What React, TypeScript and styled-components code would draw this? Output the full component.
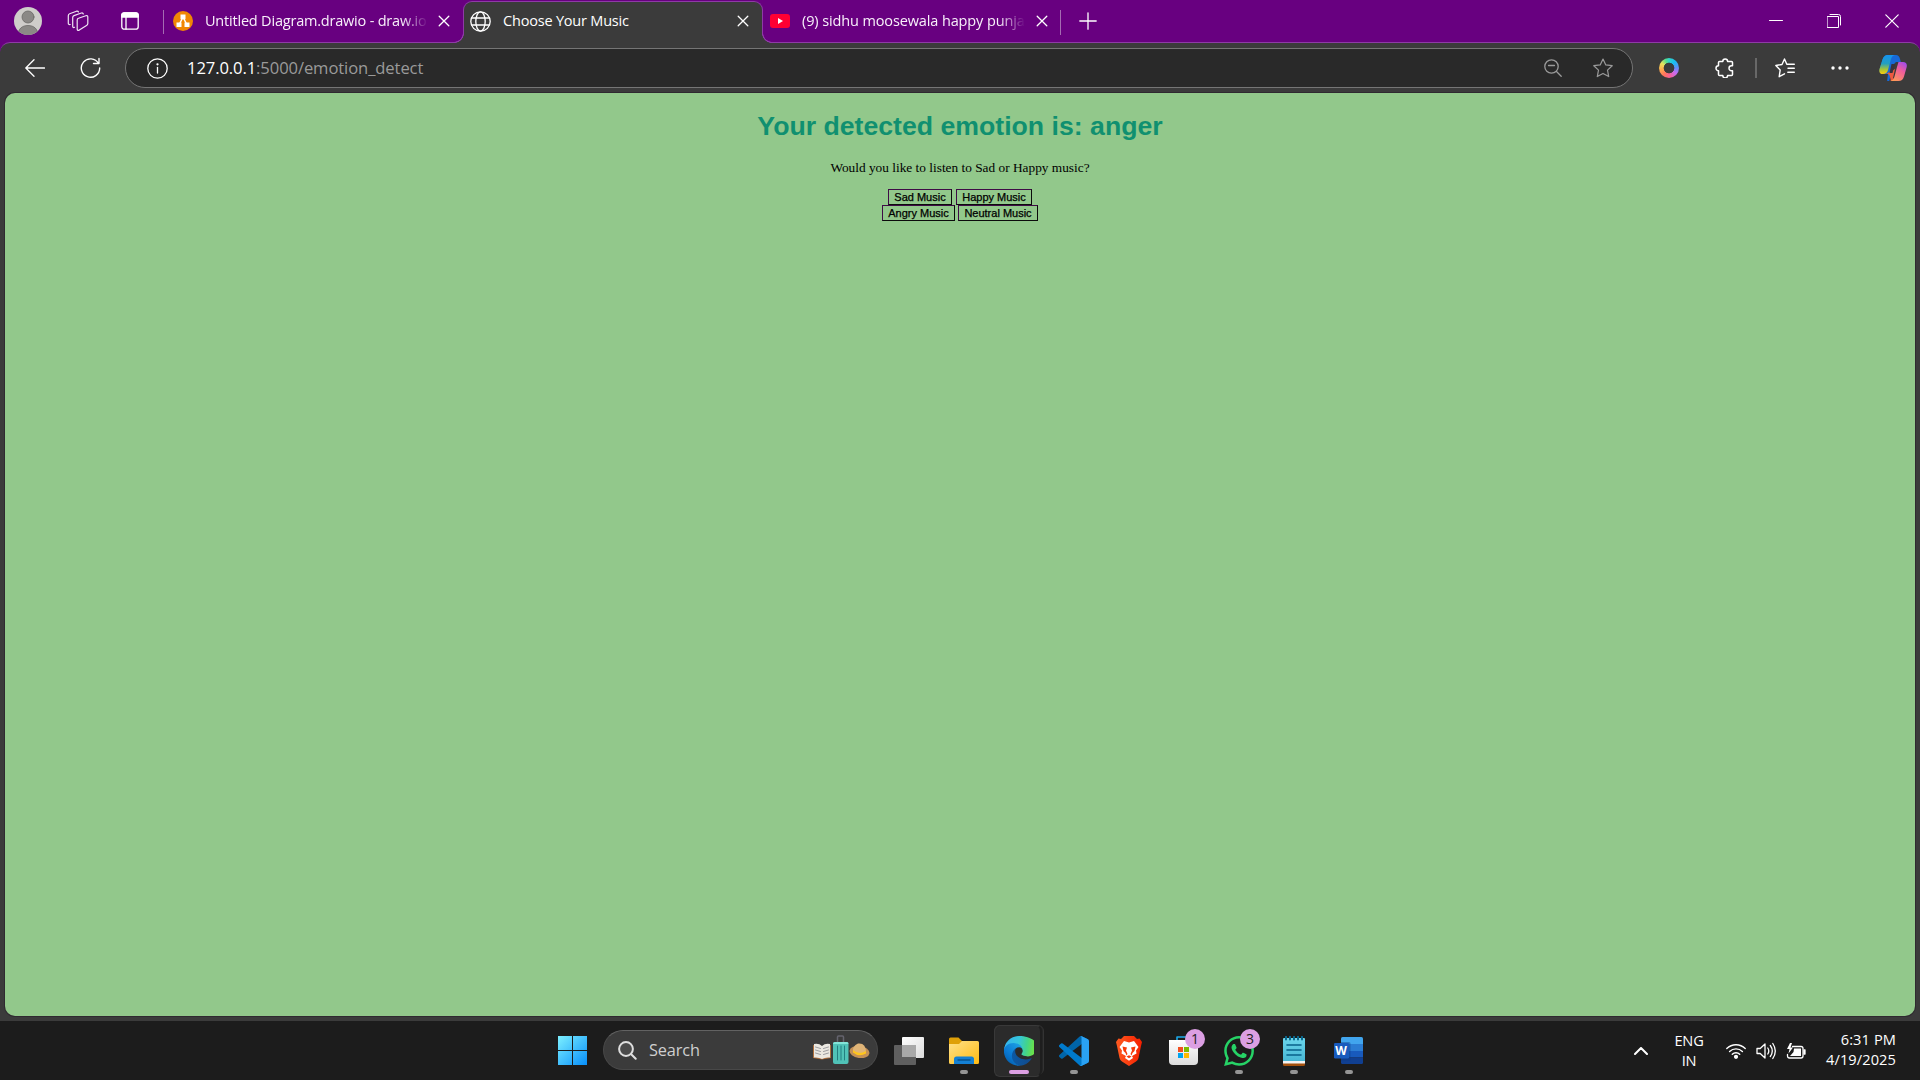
import React from "react";
import styled, { createGlobalStyle, css } from "styled-components";

const ui = `"Open Sans", "Noto Sans", sans-serif`;
const purple = "#680080";
const line = "#8e3ba6";
const chrome = "#3b3b3b";

const Global = createGlobalStyle`
  *{box-sizing:border-box}
  html,body{margin:0;padding:0;background:${purple};overflow:hidden}
  svg{display:block;flex:none}
`;

const Screen = styled.div`
  width: 1920px;
  height: 1080px;
  display: flex;
  flex-direction: column;
  background: ${purple};
  font-family: ${ui};
  overflow: hidden;
`;
const TitleBar = styled.header`
  height: 42px;
  flex: none;
  display: flex;
  align-items: flex-start;
`;
const Cell = styled.div<{ $w: number; $h?: number }>`
  width: ${(p) => p.$w}px;
  height: ${(p) => p.$h ?? 42}px;
  flex: none;
  display: flex;
  align-items: center;
  justify-content: center;
`;
const Divider = styled.i<{ $h: number; $top: number; $c: string; $w?: number }>`
  width: ${(p) => p.$w ?? 1}px;
  height: ${(p) => p.$h}px;
  margin-top: ${(p) => p.$top}px;
  background: ${(p) => p.$c};
  flex: none;
`;
const Tab = styled.div<{ $w: number; $pad: number }>`
  width: ${(p) => p.$w}px;
  height: 42px;
  padding-left: ${(p) => p.$pad}px;
  display: flex;
  align-items: center;
  color: #f8f0fa;
  flex: none;
`;
const ActiveTab = styled(Tab)`
  position: relative;
  z-index: 2;
  height: 42px;
  margin-top: 1px;
  padding-bottom: 3px;
  background: ${chrome};
  border: 1px solid ${line};
  border-bottom: 0;
  border-radius: 9px 9px 0 0;
  color: #fff;
  &::before,
  &::after {
    content: "";
    position: absolute;
    bottom: 0;
    width: 10px;
    height: 10px;
    border: 0 solid ${line};
  }
  &::before {
    left: -10px;
    background: radial-gradient(circle at 0 0, ${purple} 8.5px, ${line} 9px 9.700px, ${chrome} 10.200px);
  }
  &::after {
    right: -10px;
    background: radial-gradient(circle at 100% 0, ${purple} 8.5px, ${line} 9px 9.700px, ${chrome} 10.200px);
  }
`;
const TabTitle = styled.span<{ $w: number; $ls: number; $fade?: boolean }>`
  width: ${(p) => p.$w}px;
  margin-left: 12px;
  overflow: hidden;
  white-space: nowrap;
  font-size: 14.5px;
  line-height: 24px;
  letter-spacing: ${(p) => p.$ls}px;
  ${(p) => p.$fade && css`mask-image: linear-gradient(90deg, #000 calc(100% - 26px), transparent);`}
`;
const Spacer = styled.div`
  flex: 1;
`;
const Toolbar = styled.nav`
  height: 51px;
  flex: none;
  display: flex;
  align-items: flex-start;
  padding: 6px 0 0 7px;
  background: ${chrome};
  border-top: 1px solid ${line};
  border-radius: 10px 10px 0 0;
`;
const AddressBar = styled.div`
  width: 1508px;
  height: 40px;
  margin: -1px 0 0 7px;
  padding-left: 21px;
  display: flex;
  align-items: center;
  background: #292929;
  border: 1px solid #757575;
  border-radius: 20px;
`;
const Url = styled.span`
  margin-left: 19px;
  flex: 1;
  font-size: 16.6px;
  line-height: 26px;
  letter-spacing: -0.1px;
  color: #9a9a9a;
  b {
    font-weight: 400;
    color: #fff;
  }
`;
const Frame = styled.div`
  flex: 1;
  padding: 0 5px 5px;
  background: ${chrome};
  min-height: 0;
`;
const Page = styled.main`
  height: 100%;
  padding-top: 17px;
  display: flex;
  flex-direction: column;
  align-items: center;
  background: #92c88b;
  border-radius: 10px;
  box-shadow: 0 0 0 1px #2f2a30;
`;
const Heading = styled.h1`
  margin: 0;
  font: bold 26.67px/32px "Liberation Sans", sans-serif;
  color: #109070;
  white-space: nowrap;
`;
const Question = styled.p`
  margin: 18px 0 13px;
  font: 13.33px/16px "Liberation Serif", serif;
  color: #000;
`;
const ButtonRow = styled.div<{ $gap: number }>`
  display: flex;
  gap: ${(p) => p.$gap}px;
  height: 16px;
`;
const MusicButton = styled.button<{ $w: number }>`
  width: ${(p) => p.$w}px;
  height: 16px;
  padding: 0;
  background: transparent;
  border: 1px solid #0b0b0b;
  border-top-color: #3f0c46;
  border-left-color: #3f0c46;
  font: 11px/14px "Liberation Sans", sans-serif;
  -webkit-text-stroke: 0.25px #000;
  color: #000;
  white-space: nowrap;
`;
const Taskbar = styled.footer`
  height: 59px;
  flex: none;
  display: flex;
  padding-left: 545px;
  background: #1c1c1c;
`;
const Search = styled.div`
  width: 275px;
  height: 40px;
  margin: 9px 3px 0;
  padding-left: 14px;
  display: flex;
  align-items: center;
  background: #3b3b3b;
  border: 1px solid #484848;
  border-top-color: #626262;
  border-radius: 20px;
  color: #cfcfcf;
  font-size: 16.3px;
  span {
    width: 163px;
    margin-left: 12px;
    letter-spacing: -0.1px;
  }
`;
const AppButton = styled.div`
  position: relative;
  width: 55px;
  height: 59px;
  display: flex;
  align-items: center;
  justify-content: center;
  flex: none;
`;
const Glow = styled.div`
  position: absolute;
  left: 3px;
  top: 4px;
  width: 50px;
  height: 50px;
  border-radius: 6px;
  background: #252525;
  border: 1px solid #333;
  &::after {
    content: "";
    position: absolute;
    left: -1px;
    top: -1px;
    width: 45px;
    height: 50px;
    border-radius: 6px;
    background: #2b2b2b;
    border: 1px solid #393939;
    border-right: 2px solid #1e1e1e;
  }
`;
const Art = styled.div`
  position: relative;
`;
const Running = styled.i<{ $on?: boolean }>`
  position: absolute;
  bottom: 6px;
  left: ${(p) => (p.$on ? 18 : 24)}px;
  width: ${(p) => (p.$on ? 20 : 8)}px;
  height: 4px;
  border-radius: 2px;
  background: ${(p) => (p.$on ? "#dc9fe3" : "#959595")};
`;
const Badge = styled.b`
  position: absolute;
  left: 29px;
  top: 8px;
  width: 20px;
  height: 20px;
  border-radius: 50%;
  background: #dc9fe3;
  color: #222;
  font: 400 14px/20px ${ui};
  text-align: center;
`;
const Tray = styled.div`
  display: flex;
  margin-left: auto;
  color: #fff;
`;
const Stack = styled.div<{ $w: number; $right?: boolean; $ls: number; $top: number }>`
  width: ${(p) => p.$w}px;
  padding-top: ${(p) => p.$top}px;
  display: flex;
  flex-direction: column;
  align-items: ${(p) => (p.$right ? "flex-end" : "center")};
  padding-right: ${(p) => (p.$right ? 24 : 0)}px;
  font-size: 14.6px;
  line-height: 20px;
  letter-spacing: ${(p) => p.$ls}px;
  white-space: nowrap;
`;

type IconProps = { w?: number; h?: number; c?: string; s?: number; box?: string; children: React.ReactNode };
const Icon = ({ w = 20, h, c = "#fff", s = 1.2, box, children }: IconProps) => (
  <svg width={w} height={h ?? w} viewBox={box ?? `0 0 ${w} ${h ?? w}`} fill="none" stroke={c} strokeWidth={s} strokeLinecap="round" strokeLinejoin="round">
    {children}
  </svg>
);
const Close = () => (
  <Icon w={12} s={1.3}><path d="M1.2 1.2l9.6 9.6M10.8 1.2L1.2 10.8" /></Icon>
);
const starPath = "M10 1l2.8 5.9 6.4.8-4.7 4.4 1.2 6.5L10 15.4l-5.7 3.2 1.2-6.5L.8 7.7l6.4-.8z";

const Profile = () => (
  <Icon w={28} s={0}>
    <clipPath id="pf"><circle cx="14" cy="14" r="14" /></clipPath>
    <circle cx="14" cy="14" r="14" fill="#cfcdca" />
    <g clipPath="url(#pf)" fill="#8b8986" stroke="#6b6967" strokeWidth=".8">
      <circle cx="14" cy="10" r="6" />
      <path d="M4 28c0-6 4-9.500 10-9.500S24 22 24 28z" />
    </g>
  </Icon>
);
const Workspaces = () => (
  <Icon w={22} s={1.2} c="#efe4f2">
    <path d="M11.500 8.300l7.300-2.500q2-.6 2 1.300v6.500q0 1.300-1.300 1.900l-7.200 4.600q-2 1-2.100-1V10q0-1.300 1.300-1.700z" />
    <path d="M7.500 17.300l-.5.200q-1.300.2-1.300-1.200V7.500q0-1.300 1.300-1.900l7.400-2.600q1.500-.4 1.900 1" />
    <path d="M3.200 14.500q-1.900.3-1.900-1.300V5.700q0-1.400 1.300-1.900L9.500 1.200q1.500-.4 2 .8" />
  </Icon>
);
const TabsMenu = () => (
  <Icon w={18} s={1.3} c="#fff">
    <rect x=".8" y=".8" width="16.400" height="16.400" rx="2.500" />
    <path d="M.8 5V3a2.200 2.200 0 012.200-2.200h12A2.200 2.200 0 0117.200 3v2z" fill="#fff" />
    <path d="M5 5v12" />
  </Icon>
);
const Drawio = () => (
  <Icon w={20} s={1.5}>
    <circle cx="10" cy="10" r="10" fill="#f08705" stroke="none" />
    <path d="M10 6L6 14M10 6l4 8" />
    <path d="M7.500 3.500h5v4.800h-5zM3.500 11.500h5V16h-5zM11.500 11.500h5V16h-5z" fill="#fff" stroke="none" />
  </Icon>
);
const Globe = () => (
  <Icon w={21} s={1.3}>
    <circle cx="10.500" cy="10.500" r="9.700" />
    <ellipse cx="10.500" cy="10.500" rx="4.700" ry="9.700" />
    <path d="M1.800 7h17.400M1.800 14h17.400" />
  </Icon>
);
const Youtube = () => (
  <Icon w={20} h={14} s={0}>
    <rect width="20" height="14" rx="3" fill="#ff0033" />
    <path d="M8 4l5 3-5 3z" fill="#fff" />
  </Icon>
);
const Copilot = () => (
  <Icon w={28} h={26} s={0}>
    <defs>
      <linearGradient id="ca" x1="0" y1="0" x2="0" y2="1"><stop offset="0" stopColor="#1592f0" /><stop offset=".45" stopColor="#239fc0" /><stop offset=".75" stopColor="#a5c437" /><stop offset="1" stopColor="#ffcb0a" /></linearGradient>
      <linearGradient id="cb" x1=".8" y1="0" x2=".2" y2="1"><stop offset="0" stopColor="#a34de8" /><stop offset=".4" stopColor="#f05d9a" /><stop offset="1" stopColor="#ff9c55" /></linearGradient>
    </defs>
    <path d="M10 0h7q3 0 4 4l.8 3H17l-3 3-4 17H8l1-8H3.500Q0 18.500.7 14L3.500 4.500Q5 0 10 0z" fill="#1769d8" />
    <path d="M8 0h8q-3 .5-4 4l-3 11q-1 4-5 4-4.500 0-3.500-5L3.500 4.500Q5 0 8 0z" fill="url(#ca)" />
    <path d="M7 19q3-1 4 3l1 4h5l-3-3 2-9z" fill="#ee5940" />
    <path d="M19.500 7H24q4.500 0 3.700 5L25 21.500q-1.300 4.500-5.500 4.500H11q3.500-.5 4.500-4.500L18 12z" fill="url(#cb)" />
    <path d="M12.500 9l-2 9h3l2.500-9z" fill="#38323c" />
  </Icon>
);
const Wheel = styled.div`
  width: 20px;
  height: 20px;
  border-radius: 50%;
  background: radial-gradient(circle, ${chrome} 0 5px, transparent 5.700px),
    conic-gradient(#32d4ca, #17bdf4 12%, #5e8ff5 24%, #c46bf3 35%, #f66099 48%, #ff735c 60%, #ffac4e 72%, #e9e35c 84%, #52df91 94%, #32d4ca);
`;
const SearchArt = () => (
  <Icon w={58} h={30} s={0} c="none">
    <path d="M1 10l9 2 9-2v13l-9 1.500L1 23z" fill="#ad6e3c" />
    <path d="M2 9q5-1 8 2v13q-3-2-8-1.500zM18 9q-5-1-8 2v13q3-2 8-1.500z" fill="#ebe8e1" />
    <path d="M3.500 12l5 1.500M3.500 15l5 1.500M3.500 18l5 1.500M16.500 12l-5 1.500M16.500 15l-5 1.500M16.500 18l-5 1.500" stroke="#9d9da0" strokeWidth="1" />
    <path d="M25.500 8V2q0-1 1-1h4q1 0 1 1v6" fill="none" stroke="#65646e" strokeWidth="1.500" />
    <rect x="21" y="7" width="15.500" height="22" rx="2" fill="#50c2b7" />
    <path d="M21 9q0-2 2-2h12q1.500 0 1.500 2z" fill="#82e4d7" />
    <path d="M25.500 11v14M29 11v14M32.500 11v14" stroke="#237f80" strokeWidth="1" />
    <ellipse cx="47.500" cy="17" rx="10" ry="6" transform="rotate(8 47.500 17)" fill="#c49056" />
    <path d="M41 17q-1-6 5-8.500 8-1 8 9-6 4-13-.5z" fill="#dfb477" />
    <path d="M41 15q6 5.500 13 1v2.500q-7 4-13-1z" fill="#ffc61b" />
  </Icon>
);
const Explorer = () => (
  <Icon w={30} h={28} s={0}>
    <defs><linearGradient id="ex" x1="0" y1="0" x2="1" y2="1"><stop stopColor="#ffe18a" /><stop offset="1" stopColor="#ffbb12" /></linearGradient></defs>
    <path d="M0 8V2Q0 .5 1.500.5h8L13 4h11v6H0z" fill="#dfa008" />
    <path d="M0 7h10l3-3h15.500Q30 4 30 5.500v20q0 1.500-1.500 1.500h-27Q0 27 0 25.500z" fill="url(#ex)" />
    <path d="M5 27v-5q0-2.500 2.500-2.500h15Q25 19.500 25 22v5z" fill="#1480d4" />
    <path d="M9 23h12" stroke="#07538f" strokeWidth="1.300" />
  </Icon>
);
const Edge = () => (
  <Icon w={30} s={0} box="0 0 256 256">
    <defs>
      <linearGradient id="e1" x1="63" y1="178" x2="241" y2="178" gradientUnits="userSpaceOnUse"><stop stopColor="#0c59a4" /><stop offset="1" stopColor="#114a8b" /></linearGradient>
      <linearGradient id="e2" x1="157" y1="100" x2="46" y2="222" gradientUnits="userSpaceOnUse"><stop stopColor="#1b9de2" /><stop offset=".65" stopColor="#0b7ad4" /><stop offset="1" stopColor="#0667b8" /></linearGradient>
      <linearGradient id="e3" x1="15" y1="60" x2="250" y2="100" gradientUnits="userSpaceOnUse"><stop stopColor="#35b5ed" /><stop offset=".45" stopColor="#35c5dc" /><stop offset=".75" stopColor="#42d48c" /><stop offset="1" stopColor="#68e04d" /></linearGradient>
    </defs>
    <path d="M231 190a94 94 0 01-11 5 102 102 0 01-36 6c-47 0-89-32-89-74 0-11 7-22 17-28-43 2-54 46-54 72 0 74 68 81 82 81 8 0 20-2 27-4l1-1a128 128 0 0067-53 3 3 0 00-4-4z" fill="url(#e1)" />
    <path d="M106 241a79 79 0 01-23-21 81 81 0 0130-121c3-1 8-4 15-4a31 31 0 0125 12 30 30 0 016 18c0-1 25-79-80-79-44 0-80 42-80 79a130 130 0 0012 56 128 128 0 00156 67 76 76 0 01-61-7z" fill="url(#e2)" />
    <path d="M152 149c-1 1-3 2-3 6 0 3 2 6 6 8 17 12 50 11 50 11a72 72 0 0036-10 73 73 0 0036-63c0-27-10-44-13-53C240 18 186 0 128 0A128 128 0 000 126c1-37 37-67 80-67 4 0 24 0 42 10 16 8 25 18 31 29 6 10 7 24 7 29s-3 13-8 22z" fill="url(#e3)" />
  </Icon>
);
const VsCode = () => (
  <Icon w={30} s={0} box="0 0 100 100">
    <path d="M96.500 10.700L75.900.8a6.200 6.200 0 00-7.100 1.200L1.300 63.500a4.200 4.200 0 000 6.200l5.500 5a4.200 4.200 0 005.300.2l81.300-61.600A4 4 0 01100 16.500v-.3a6.300 6.300 0 00-3.500-5.500z" fill="#0065a9" />
    <path d="M96.500 89.300l-20.600 9.900a6.200 6.200 0 01-7.100-1.200L1.300 36.500a4.200 4.200 0 010-6.200l5.500-5a4.200 4.200 0 015.300-.2l81.300 61.600a4 4 0 006.600-3.200v.3a6.300 6.300 0 01-3.500 5.500z" fill="#007acc" />
    <path d="M75.900 99.200a6.200 6.200 0 01-7.100-1.200c2.300 2.300 6.200.7 6.200-2.600V4.600c0-3.300-3.900-4.900-6.200-2.600a6.200 6.200 0 017.100-1.200l20.600 9.900a6.300 6.300 0 013.500 5.600v67.400a6.300 6.300 0 01-3.500 5.600z" fill="#2aa2f4" />
  </Icon>
);
const Brave = () => (
  <Icon w={26} h={30} s={0}>
    <defs><linearGradient id="br"><stop stopColor="#ff5b20" /><stop offset="1" stopColor="#f51f00" /></linearGradient></defs>
    <path d="M8 0h10l3 3 2.500-.5L26 6l-1 4-2.500 12q-.5 2-2.500 3.500L13 30l-7-4.500Q4 24 3.500 22L1 10 0 6l2.500-3.500L5 3z" fill="url(#br)" />
    <path d="M13 6.500l5-1.500 4.500 6-2.500 3.500.5 3-4.500 2.500 1 2-4 2.800-4-2.800 1-2L5.500 17.500l.5-3L3.500 11 8 5z" fill="#fff" />
    <path d="M6.500 10.500l4.500 1-1 3 1.500 3.500-1 1.500-1-2.500-2-2zM19.500 10.500l-4.500 1 1 3-1.500 3.500 1 1.500 1-2.500 2-2z" fill="#f63b0a" />
    <path d="M10.500 20.500l2.500-1.300 2.500 1.300-2.500 1.700z" fill="#f63b0a" />
  </Icon>
);
const Store = () => (
  <Icon w={29} h={29} s={0}>
    <defs><linearGradient id="st" x2="0" y2="1"><stop stopColor="#fff" /><stop offset="1" stopColor="#dcdcdc" /></linearGradient></defs>
    <path d="M8 7V1h13v6" fill="none" stroke="#1ba8e8" strokeWidth="1.600" />
    <path d="M0 4h29v21q0 4-4 4H4q-4 0-4-4z" fill="url(#st)" />
    <path d="M9 11h5v5H9z" fill="#f25022" /><path d="M15 11h5v5h-5z" fill="#7fba00" />
    <path d="M9 17h5v5H9z" fill="#00a4ef" /><path d="M15 17h5v5h-5z" fill="#ffb900" />
  </Icon>
);
const WhatsApp = () => (
  <Icon w={30} s={0} box="0 0 24 24">
    <path fill="#26d366" d="M17.472 14.382c-.297-.149-1.758-.867-2.030-.967-.273-.099-.471-.148-.67.150-.197.297-.767.966-.940 1.164-.173.199-.347.223-.644.075-.297-.150-1.255-.463-2.390-1.475-.883-.788-1.480-1.761-1.653-2.059-.173-.297-.018-.458.130-.606.134-.133.298-.347.446-.520.149-.174.198-.298.298-.497.099-.198.050-.371-.025-.520-.075-.149-.669-1.612-.916-2.207-.242-.579-.487-.500-.669-.510-.173-.008-.371-.010-.570-.010-.198 0-.520.074-.792.372-.272.297-1.040 1.016-1.040 2.479 0 1.462 1.065 2.875 1.213 3.074.149.198 2.096 3.200 5.077 4.487.709.306 1.262.489 1.694.625.712.227 1.360.195 1.871.118.571-.085 1.758-.719 2.006-1.413.248-.694.248-1.289.173-1.413-.074-.124-.272-.198-.570-.347m-5.421 7.403a9.870 9.870 0 01-5.031-1.378l-.361-.214-3.741.982.998-3.648-.235-.374a9.860 9.860 0 01-1.510-5.260c.001-5.450 4.436-9.884 9.888-9.884a9.825 9.825 0 019.884 9.892c-.003 5.450-4.437 9.884-9.885 9.884m8.413-18.297A11.815 11.815 0 0012.050 0C5.495 0 .160 5.335.157 11.892c0 2.096.547 4.142 1.588 5.945L.057 24l6.305-1.654a11.882 11.882 0 005.683 1.448c6.554 0 11.890-5.335 11.893-11.893a11.821 11.821 0 00-3.480-8.413z" />
  </Icon>
);
const Notepad = () => (
  <Icon w={22} h={30} s={0}>
    <defs><linearGradient id="np" x2="0" y2="1"><stop stopColor="#6bd6ec" /><stop offset="1" stopColor="#48b7d4" /></linearGradient></defs>
    <path d="M0 25h22v3.500Q22 30 20.500 30h-19Q0 30 0 28.500z" fill="#a3500d" />
    <path d="M0 3q0-1 1-1h20q1 0 1 1v22H0z" fill="url(#np)" />
    <path d="M0 25h22v2.500H0z" fill="#f3f3f3" />
    <path d="M4 9h14M4 14h14M4 19h14" stroke="#08618a" strokeWidth="1.600" />
    <path d="M3 .5v3M7 .5v3M11 .5v3M15 .5v3M19 .5v3" stroke="#0b668c" strokeWidth="2" />
  </Icon>
);
const WordMark = styled.text`
  font: bold 12px ${ui};
  fill: #fff;
`;
const Word = () => (
  <Icon w={30} h={28} s={0}>
    <clipPath id="wd"><rect x="7" width="22" height="27" rx="1.500" /></clipPath>
    <g clipPath="url(#wd)">
      <path d="M7 0h22v7H7z" fill="#41a5ee" /><path d="M7 7h22v7H7z" fill="#2b7cd3" />
      <path d="M7 14h22v6.500H7z" fill="#185abd" /><path d="M7 20.500h22V27H7z" fill="#103f91" />
      <path d="M7 5h8q1.500 0 1.500 1.500V22q0 1.500-1.500 1.500H7z" fill="#0c367e" opacity=".4" />
    </g>
    <rect x="0" y="6" width="15" height="15.500" rx="1.200" fill="#185abd" />
    <WordMark x="1.300" y="18">W</WordMark>
  </Icon>
);
const apps = [
  { art: <Explorer />, run: true }, { art: <Edge />, run: true, active: true }, { art: <VsCode />, run: true }, { art: <Brave /> },
  { art: <Store />, badge: "1" }, { art: <WhatsApp />, badge: "3", run: true }, { art: <Notepad />, run: true }, { art: <Word />, run: true },
];

export default function App() {
  return (
    <Screen>
      <Global />
      <TitleBar>
        <Cell $w={56}><Profile /></Cell>
        <Cell $w={43}><Workspaces /></Cell>
        <Cell $w={62}><TabsMenu /></Cell>
        <Cell $w={3}><Spacer /><Divider $h={24} $top={1} $c="#a46cb2" /></Cell>
        <Tab $w={299} $pad={9}>
          <Drawio />
          <TabTitle $w={223} $ls={-0.2} $fade>Untitled Diagram.drawio - draw.io</TabTitle>
          <Cell $w={32}><Close /></Cell>
        </Tab>
        <ActiveTab $w={300} $pad={6}>
          <Globe />
          <TabTitle $w={227} $ls={-0.2}>Choose Your Music</TabTitle>
          <Cell $w={26}><Close /></Cell>
        </ActiveTab>
        <Tab $w={297} $pad={7}>
          <Youtube />
          <TabTitle $w={223} $ls={-0.12} $fade>(9) sidhu moosewala happy punjabi</TabTitle>
          <Cell $w={34}><Close /></Cell>
        </Tab>
        <Divider $h={25} $top={10} $c="#a46cb2" />
        <Cell $w={54}><Icon w={18} s={1.3}><path d="M9 .8v16.400M.8 9h16.400" /></Icon></Cell>
        <Spacer />
        <Cell $w={58}><Icon w={14} s={1}><path d="M.5 6.500h13" /></Icon></Cell>
        <Cell $w={58}><Icon w={14} s={1}><rect x=".5" y="2.500" width="11" height="11" /><path d="M3 .5h8.500q2 0 2 2V11" /></Icon></Cell>
        <Cell $w={57}><Icon w={14} s={1.2}><path d="M.8.800l12.400 12.400M13.200.8L.8 13.200" /></Icon></Cell>
      </TitleBar>
      <Toolbar>
        <Cell $w={56} $h={38}><Icon w={20} h={18} s={1.3}><path d="M9 .7L.8 9 9 17.300M1 9h18.500" /></Icon></Cell>
        <Cell $w={55} $h={38}><Icon w={22} s={1.4}><path d="M18.500 6.500A9.200 9.200 0 1019.700 11M19 1.500V6.500h-5.500" /></Icon></Cell>
        <AddressBar>
          <Icon w={21} s={1.3}><circle cx="10.500" cy="10.500" r="9.700" /><path d="M10.500 9.500v5.500" /><circle cx="10.500" cy="6.300" r=".5" fill="#fff" /></Icon>
          <Url><b>127.0.0.1</b>:5000/emotion_detect</Url>
          <Cell $w={50} $h={38}><Icon w={18} c="#9a9a9a" s={1.3}><circle cx="7.500" cy="7.500" r="6.700" /><path d="M4.500 6.500h6M12.500 12.500l4.700 4.700" /></Icon></Cell>
          <Cell $w={50} $h={38}><Icon w={20} c="#9a9a9a" s={1.2}><path d={starPath} /></Icon></Cell>
          <Cell $w={4} $h={38} />
        </AddressBar>
        <Cell $w={9} $h={38} />
        <Cell $w={54} $h={38}><Wheel /></Cell>
        <Cell $w={57} $h={38}><Icon w={20} s={1.5}><path d="M4.500 3.500h3.300a2.400 2.400 0 014.800 0h3.900q1 0 1 1v3.300h-1a2.300 2.300 0 000 5h1v3.700q0 1-1 1h-3.900a2.400 2.400 0 01-4.800 0H4.500q-1 0-1-1v-3.700a2.500 2.500 0 010-5V4.500q0-1 1-1z" /></Icon></Cell>
        <Cell $w={5} $h={38}><Divider $h={20} $top={0} $c="#686868" $w={2} /></Cell>
        <Cell $w={54} $h={38}><Icon w={20} s={1.4}><path d="M11.800 6.300L9.500 1 7 6.500.8 7.500l4.400 4.400-1 6.800 5.300-2.900M11.800 6.300h7.500M13 10.300h6.300M12.800 14.300h6.500" /></Icon></Cell>
        <Cell $w={55} $h={38}><Icon w={18} h={4} s={0}><circle cx="2" cy="2" r="1.700" fill="#fff" /><circle cx="9" cy="2" r="1.700" fill="#fff" /><circle cx="16" cy="2" r="1.700" fill="#fff" /></Icon></Cell>
        <Cell $w={52} $h={38}><Copilot /></Cell>
      </Toolbar>
      <Frame>
        <Page>
          <Heading>Your detected emotion is: anger</Heading>
          <Question>Would you like to listen to Sad or Happy music?</Question>
          <ButtonRow $gap={4}><MusicButton $w={64}>Sad Music</MusicButton><MusicButton $w={76}>Happy Music</MusicButton></ButtonRow>
          <ButtonRow $gap={3}><MusicButton $w={73}>Angry Music</MusicButton><MusicButton $w={80}>Neutral Music</MusicButton></ButtonRow>
        </Page>
      </Frame>
      <Taskbar>
        <AppButton>
          <Icon w={29} s={0}>
            <defs><linearGradient id="wn" x2="29" y2="29" gradientUnits="userSpaceOnUse"><stop stopColor="#7df0ff" /><stop offset="1" stopColor="#078ffb" /></linearGradient></defs>
            <path d="M0 0h14v14H0zM15 0h14v14H15zM0 15h14v14H0zM15 15h14v14H15z" fill="url(#wn)" />
          </Icon>
        </AppButton>
        <Search>
          <Icon w={19} c="#dedede" s={2}><circle cx="8" cy="8" r="6.900" fill="#4b4b4b" /><path d="M13.200 13.200l4.500 4.600" /></Icon>
          <span>Search</span>
          <SearchArt />
        </Search>
        <AppButton>
          <Icon w={30} h={28} s={0}>
            <defs><linearGradient id="tv" x2="1" y2="1"><stop stopColor="#fff" /><stop offset="1" stopColor="#dcdcdc" /></linearGradient></defs>
            <rect x="8" y="0" width="22" height="21" rx="1" fill="url(#tv)" />
            <rect x="0" y="8" width="22" height="20" rx="1" fill="#5f5f5f" />
            <path d="M8 8h14v12H8z" fill="#a9a9a9" />
          </Icon>
        </AppButton>
        {apps.map((a, i) => (
          <AppButton key={i}>
            {a.active && <Glow />}
            <Art>{a.art}</Art>
            {a.badge && <Badge>{a.badge}</Badge>}
            {a.run && <Running $on={a.active} />}
          </AppButton>
        ))}
        <Tray>
          <Cell $w={48} $h={59}><Icon w={14} h={8} s={2}><path d="M1 7l6-6 6 6" /></Icon></Cell>
          <Stack $w={48} $ls={-0.2} $top={9}><span>ENG</span><span>IN</span></Stack>
          <Cell $w={8} $h={59} />
          <Cell $w={30} $h={59}><Icon w={20} h={16} s={1.4}><path d="M.8 5.500a13 13 0 0118.400 0M3.600 8.500a9 9 0 0112.800 0M6.300 11.300a5.300 5.300 0 017.400 0" /><circle cx="10" cy="13.800" r="1.400" fill="#fff" /></Icon></Cell>
          <Cell $w={30} $h={59}><Icon w={20} h={18} s={1.3}><path d="M1 6.500h3.200L9 2v14l-4.800-4.500H1z" /><path d="M11.800 6q2 3 0 6M14.300 3.500q4 5.500 0 11M16.800 1.500q5 7.500 0 15" /></Icon></Cell>
          <Cell $w={30} $h={59}><Icon w={20} h={18} s={1.3}><path d="M6.500 4.500H15q2 0 2 2V14q0 2-2 2H3.500q-2 0-2-2v-1.500" /><path d="M8 6.500h7V14H4l3.500-4z" fill="#fff" stroke="none" /><path d="M18 8h1v4h-1z" fill="#fff" /><path d="M4 1L1 7h2.500L2.500 11.500 7 5.500H4.500L6 1z" fill="#fff" stroke="none" /></Icon></Cell>
          <Stack $w={109} $right $ls={0.1} $top={8}><span>6:31 PM</span><span>4/19/2025</span></Stack>
        </Tray>
      </Taskbar>
    </Screen>
  );
}
